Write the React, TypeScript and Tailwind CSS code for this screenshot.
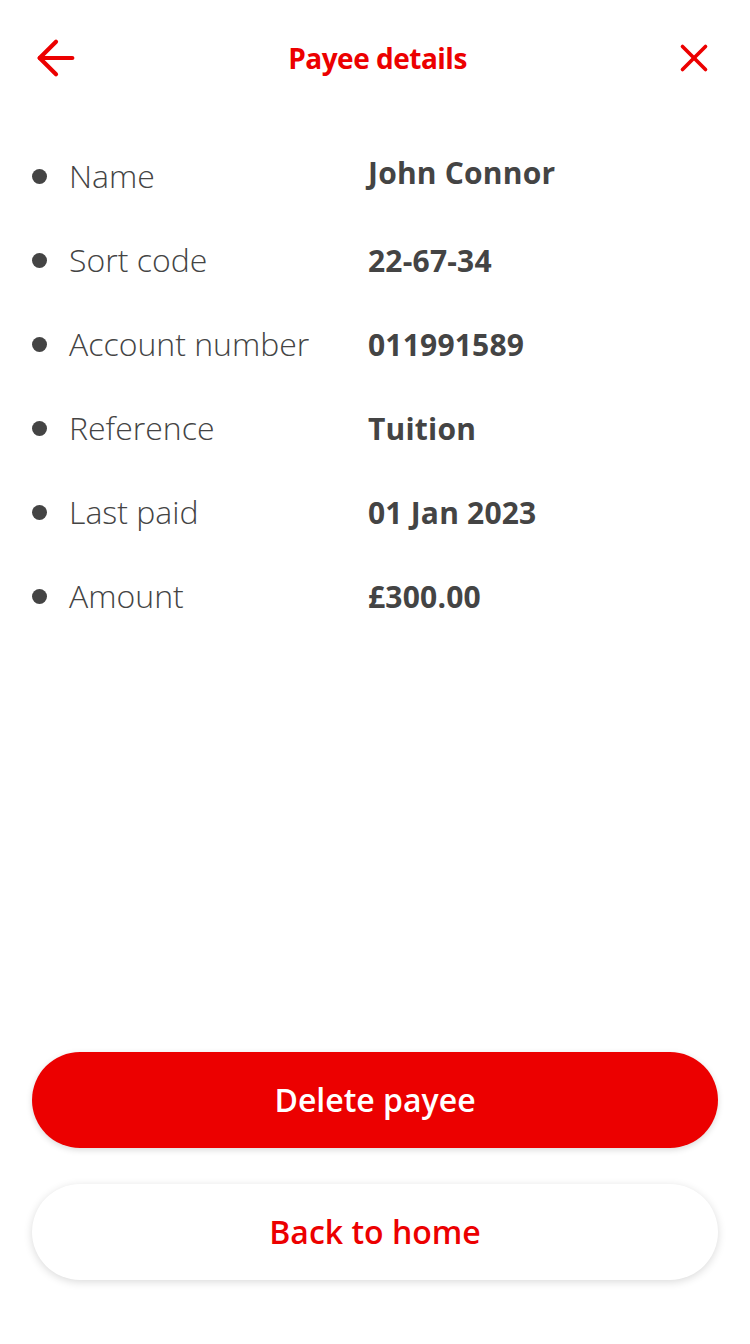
import { ArrowLeft, X } from "lucide-react";

const rows = [
  { label: "Name", value: "John Connor" },
  { label: "Sort code", value: "22-67-34" },
  { label: "Account number", value: "011991589" },
  { label: "Reference", value: "Tuition" },
  { label: "Last paid", value: "01 Jan 2023" },
  { label: "Amount", value: "£300.00" },
];

export default function App() {
  return (
    <main
      className="flex min-h-[1344px] w-[750px] flex-col bg-white"
      style={{ fontFamily: '"Open Sans", "Noto Sans", sans-serif' }}
    >
      <header className="flex h-[118px] items-center justify-between pb-[2px] pl-[28px] pr-[33px]">
        <ArrowLeft className="h-[56px] w-[56px] text-[#ec0000]" strokeWidth={1.8} />
        <h1 className="text-[28px] font-bold tracking-[-0.5px] text-[#ec0000]">Payee details</h1>
        <X className="h-[46px] w-[46px] text-[#ec0000]" strokeWidth={1.9} />
      </header>

      <ul className="flex flex-col px-[32px] pt-[16px]">
        {rows.map((row, i) => (
          <li key={row.label} className="flex h-[84px] items-center">
            <span className="mr-[22px] h-[15px] w-[15px] rounded-full bg-[#444444]" />
            <span className="w-[299px] text-[32px] font-light text-[#444444]">{row.label}</span>
            <span className={`text-[30px] font-bold tracking-[0.2px] text-[#444444] ${i === 0 ? "-mt-[8px]" : ""}`}>
              {row.value}
            </span>
          </li>
        ))}
      </ul>

      <div className="mt-auto flex flex-col gap-[36px] px-[32px] pb-[64px]">
        <button className="h-[96px] w-full rounded-full bg-[#ec0000] text-[32px] font-semibold text-white shadow-[0_2px_6px_rgba(0,0,0,0.15)]">
          Delete payee
        </button>
        <button className="h-[96px] w-full rounded-full bg-white text-[32px] font-semibold text-[#ec0000] shadow-[0_2px_8px_rgba(0,0,0,0.15)]">
          Back to home
        </button>
      </div>
    </main>
  );
}
